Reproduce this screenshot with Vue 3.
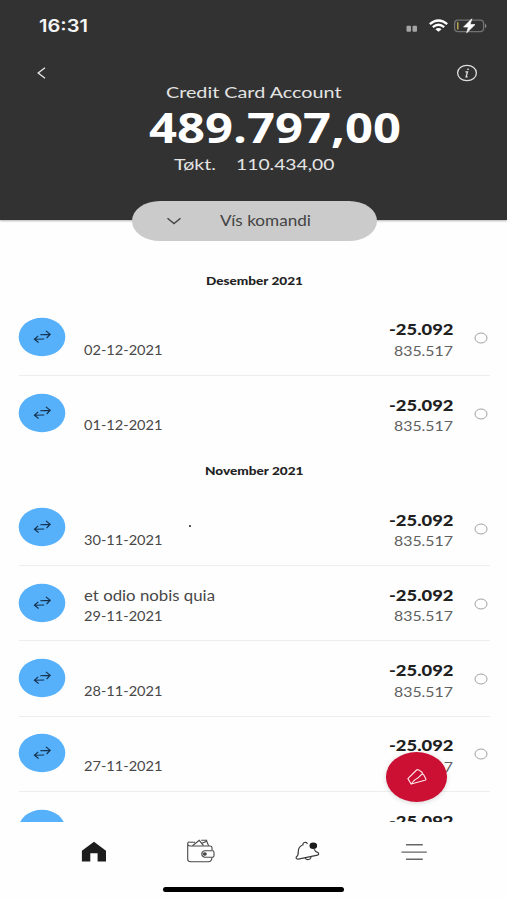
<script setup>
import { defineComponent, h } from 'vue'

// Single line of text set to an exact width on a fixed baseline.
const WideText = defineComponent({
  props: {
    text: String,
    w: Number,
    size: Number,
    lh: { type: Number, default: 20 },
    base: { type: Number, default: 15 },
  },
  setup(p) {
    return () =>
      h('svg', { class: 'wide', width: p.w, height: p.lh }, [
        h(
          'text',
          { x: 0, y: p.base, 'font-size': p.size, textLength: p.w, lengthAdjust: 'spacingAndGlyphs', fill: 'currentColor' },
          p.text
        ),
      ])
  },
})

const groups = [
  {
    title: 'Desember 2021',
    w: 97,
    rows: [{ id: 1, date: '02-12-2021' }, { id: 2, date: '01-12-2021' }],
  },
  {
    title: 'November 2021',
    w: 98.5,
    rows: [
      { id: 3, date: '30-11-2021', dot: true },
      { id: 4, date: '29-11-2021', name: 'et odio nobis quia' },
      { id: 5, date: '28-11-2021' },
      { id: 6, date: '27-11-2021' },
      { id: 7 },
    ],
  },
]
</script>

<template>
  <div class="screen">
    <header class="top">
      <div class="status">
        <WideText class="clock" text="16:31" :w="49" :size="17" />
        <svg class="sys" width="84" height="20" viewBox="0 0 84 20">
          <rect x="3.5" y="8.7" width="4.5" height="6" rx="1" fill="#a5a5a5" />
          <rect x="9.5" y="8.7" width="4.5" height="6" rx="1" fill="#a5a5a5" />
          <g fill="none" stroke="#fff" stroke-width="2.3">
            <path d="M26.8 7.2Q35.5 -0.2 44.2 7.2" />
            <path d="M29.8 10.1Q35.5 5.4 41.2 10.1" />
          </g>
          <path d="M32.4 12.2Q35.5 9.9 38.6 12.2L35.5 14.8Z" fill="#fff" />
          <rect x="51.6" y="3.1" width="29" height="11.6" rx="3.4" fill="none" stroke="#737373" stroke-width="1.3" />
          <path d="M82 6.6q2.8 2.3 0 4.6z" fill="#8a8a8a" />
          <rect x="54" y="5" width="1.5" height="7.6" rx=".7" fill="#b7a64f" />
          <path d="M68.8 1.8L60.6 10H65.4L63.7 15.8L72 7.6H67.1Z" fill="#fff" stroke="#fff" stroke-width=".7" stroke-linejoin="round" />
        </svg>
      </div>
      <div class="nav">
        <svg width="12" height="14" viewBox="0 0 12 14">
          <path d="M9 1.8L2.2 7L9 12.2" fill="none" stroke="#e2e2e2" stroke-width="1.4" />
        </svg>
        <svg width="22" height="18" viewBox="0 0 22 18">
          <ellipse cx="11" cy="9" rx="9.4" ry="7.7" fill="none" stroke="#dedede" stroke-width="1.3" />
          <path d="M9.4 7.8H11.5L10.1 12.8H11.7" fill="none" stroke="#dedede" stroke-width="1.3" />
          <ellipse cx="12" cy="5.2" rx="1" ry=".8" fill="#dedede" />
        </svg>
      </div>
      <WideText class="title" text="Credit Card Account" :w="175.5" :size="16" />
      <WideText class="amount" text="489.797,00" :w="252" :size="40.5" :lh="52" :base="39.6" />
      <div class="avail">
        <WideText text="Tøkt." :w="42" :size="16" />
        <WideText text="110.434,00" :w="98.5" :size="16" />
      </div>
      <button class="pill">
        <svg width="16" height="10" viewBox="0 0 16 10">
          <path d="M1.5 2.2L8 7.6L14.5 2.2" fill="none" stroke="#444" stroke-width="1.4" />
        </svg>
        <WideText text="Vís komandi" :w="91" :size="15" />
      </button>
    </header>

    <main class="list">
      <section v-for="g in groups" :key="g.title" class="group">
        <h2><WideText :text="g.title" :w="g.w" :size="11.5" /></h2>
        <div v-for="r in g.rows" :key="r.id" class="row">
          <svg class="avatar" width="50" height="42" viewBox="0 0 50 42">
            <ellipse cx="25" cy="21" rx="23.3" ry="19.3" fill="#56b0fa" />
            <g fill="none" stroke="#14304b" stroke-width="1.1">
              <path d="M23.3 18.7L33 18.4M28.9 14.9L33.2 18.4L29.6 22" />
              <path d="M27.2 23L17.4 23.3M21.2 19.8L17.4 23.3L21.6 26.5" />
            </g>
          </svg>
          <div class="info">
            <WideText v-if="r.name" :text="r.name" :w="131" :size="14.6" />
            <span v-else class="blank"><i v-if="r.dot" class="speck"></i></span>
            <WideText v-if="r.date" :text="r.date" :w="78.5" :size="12.8" />
          </div>
          <div class="sums">
            <WideText class="sum" text="-25.092" :w="64.5" :size="14.8" />
            <WideText v-if="r.date" class="left" text="835.517" :w="59" :size="12.6" />
          </div>
          <svg class="mark" width="14" height="12" viewBox="0 0 14 12">
            <ellipse cx="7" cy="6" rx="6" ry="5" fill="none" stroke="#a2a2a2" stroke-width="1" />
          </svg>
        </div>
      </section>
    </main>

    <button class="fab">
      <svg width="22" height="18" viewBox="0 0 22 18" fill="none" stroke="#ffe9ec" stroke-width="1.1" stroke-linejoin="round">
        <path d="M1.9 10.6L10.6 2Q11.5 1.3 12.6 1.9L16 4.2Q16.8 5 16.1 6L11.5 10.3Q9.5 11.2 7.6 13L5.1 16Z" />
        <path d="M5.1 16L18.9 12.3Q20.2 11.8 19.8 10.8L17.4 6.3L16.1 6" />
      </svg>
    </button>

    <footer class="tabs">
      <div class="icons">
        <svg width="26" height="24" viewBox="0 0 26 24">
          <path d="M13 1.7L25 10.7V21.5H16.6V13.2H9.3V21.5H.9V10.7Z" fill="#1d1d1d" />
        </svg>
        <svg width="30" height="26" viewBox="0 0 30 26" fill="none" stroke="#484848" stroke-width="1.1">
          <path d="M26 11V8.7Q26 7 24 7H4.2Q1.7 7 1.7 4.8T4.2 3.2H9M1.7 5V20.3Q1.7 22.8 4.7 22.8H22.5Q25.5 22.8 26 18.5" />
          <path d="M6.5 6.7L13.2 1.3L17.5 6.7M16 4.2L20.7 2.3L22.6 6.7M20.6 2.3V1.3H15.2" />
          <path d="M26.6 11.8H18.6Q15.8 12.2 15.8 15T18.6 18.2H26.6Q28 18.2 28 16.5V13.5Q28 11.8 26.6 11.8Z" />
          <ellipse cx="18.8" cy="15" rx="1.5" ry="1.2" fill="#484848" />
        </svg>
        <svg width="28" height="24" viewBox="0 0 28 24" fill="none" stroke="#3c3c3c" stroke-width="1.2">
          <path d="M13.4 4Q12.8 1.8 10.3 2.5Q8.6 3 9 4.8Q4.4 6.5 4.3 11.5Q4.4 15.7 2.3 17Q1.5 19 4.3 19.2L23.5 15.2Q25.8 14 23.6 12.3Q21.4 12 20.2 9.2" />
          <path d="M11 18.1Q12.8 20.3 15.5 19.3Q17 18.6 17 16.8" />
          <ellipse cx="19.3" cy="5.7" rx="3.8" ry="3.3" fill="#1b1b1b" stroke="none" />
        </svg>
        <svg width="26" height="20" viewBox="0 0 26 20" stroke="#666" stroke-width="1.4">
          <path d="M5 2.8H21.8M.5 10.1H25.8M5 17.3H21.8" />
        </svg>
      </div>
      <div class="bar"></div>
    </footer>
  </div>
</template>

<style>
body {
  margin: 0;
  background: #fff;
}
svg.wide {
  display: block;
  overflow: visible;
  flex: none;
}
</style>

<style scoped>
.screen {
  position: relative;
  width: 507px;
  height: 900px;
  overflow: hidden;
  display: flex;
  flex-direction: column;
  background: #fefefe;
  font-family: Lato, 'Liberation Sans', sans-serif;
}
svg {
  display: block;
  flex: none;
}
button {
  border: 0;
  padding: 0;
}
.top {
  position: relative;
  box-sizing: border-box;
  height: 220px;
  flex: none;
  background: #323232;
  box-shadow: 0 1px 2px rgba(0, 0, 0, 0.3);
  color: #e4e4e4;
}
.status {
  display: flex;
  justify-content: space-between;
  padding: 17px 20px 0 38.5px;
}
.clock {
  font-family: Inter, sans-serif;
  font-weight: 600;
  color: #f6f6f6;
}
.nav {
  display: flex;
  justify-content: space-between;
  align-items: center;
  height: 20.5px;
  padding: 25.5px 29.5px 0 35.5px;
}
.title {
  margin: 0 0 0 165.5px;
}
.amount {
  margin: 0 0 0 148.5px;
  font-family: 'Open Sans', sans-serif;
  font-weight: 700;
  color: #fff;
}
.avail {
  display: flex;
  gap: 20px;
  padding-left: 173.5px;
}
.pill {
  position: absolute;
  left: 131.5px;
  top: 200.5px;
  width: 245px;
  height: 40px;
  border-radius: 28px / 20px;
  background: #cbcbcb;
  color: #444;
  display: flex;
  align-items: center;
  gap: 38px;
  padding-left: 34.5px;
  font-family: inherit;
}
.list {
  height: 602px;
  flex: none;
  overflow: hidden;
  box-sizing: border-box;
  padding: 42.3px 17px 0;
}
h2 {
  height: 20px;
  margin: 0;
  padding: 8.6px 0 11px 187.5px;
  font-weight: 900;
  color: #222;
}
.group:first-child h2 {
  padding: 8.2px 0 10.1px 189px;
}
.row {
  box-sizing: border-box;
  height: 75.3px;
  display: flex;
  border-bottom: 1.4px solid #eeeeee;
  margin: 0 0 0 2px;
}
.row:last-child {
  border-bottom-color: transparent;
}
.avatar {
  margin: 15.7px 0 0 -1.7px;
}
.info {
  flex: 1;
  padding: 19.6px 0 0 16.2px;
  color: #484848;
}
.blank {
  display: block;
  height: 20px;
  padding: 15px 0 0 105px;
  box-sizing: border-box;
}
.speck {
  display: block;
  width: 2px;
  height: 1.5px;
  background: #555;
}
.sums {
  padding-top: 19.8px;
}
.sum {
  font-weight: 900;
  color: #202020;
}
.left {
  margin: 0.4px 0 0 5.5px;
  color: #606060;
}
.mark {
  margin: 31.8px 2.4px 0 20.6px;
}
.fab {
  position: absolute;
  left: 386px;
  top: 752px;
  width: 61px;
  height: 49.5px;
  border-radius: 50%;
  background: #cb1033;
  box-shadow: 0 1px 5px rgba(0, 0, 0, 0.16);
  display: flex;
  align-items: center;
  justify-content: center;
}
.tabs {
  height: 78px;
  flex: none;
  background: #fefefe;
}
.icons {
  display: flex;
  justify-content: space-between;
  align-items: center;
  height: 60px;
  padding: 0 80.5px 0 81px;
}
.bar {
  width: 181px;
  height: 5.2px;
  margin: 4.8px auto 0;
  border-radius: 3px;
  background: #000;
}
</style>
